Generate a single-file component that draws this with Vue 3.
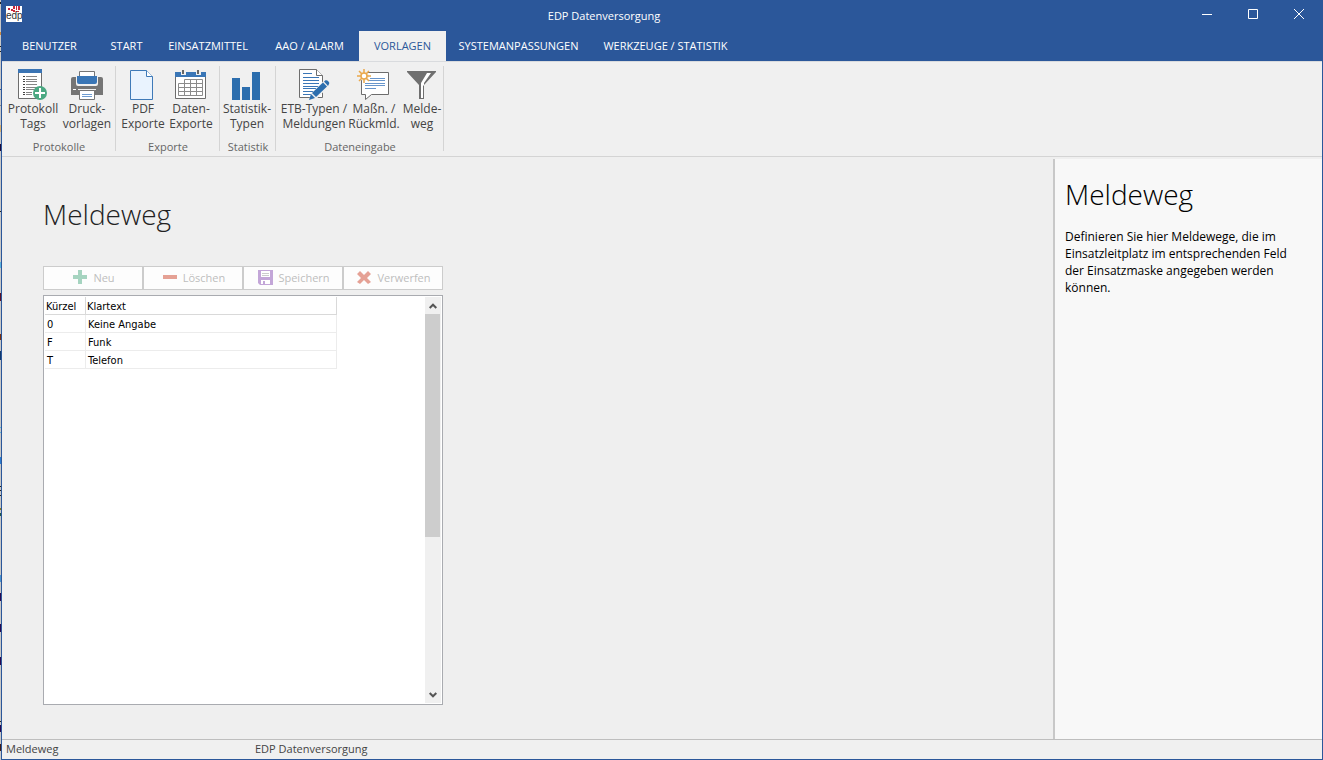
<script setup>
const tabs = ['BENUTZER', 'START', 'EINSATZMITTEL', 'AAO / ALARM', 'VORLAGEN', 'SYSTEMANPASSUNGEN', 'WERKZEUGE / STATISTIK']
const activeTab = 'VORLAGEN'

const groups = [
  { name: 'Protokolle', key: 'protokolle', items: [
    { icon: 'tags', lines: ['Protokoll', 'Tags'] },
    { icon: 'printer', lines: ['Druck-', 'vorlagen'] },
  ] },
  { name: 'Exporte', key: 'exporte', items: [
    { icon: 'pdf', lines: ['PDF', 'Exporte'] },
    { icon: 'calendar', lines: ['Daten-', 'Exporte'] },
  ] },
  { name: 'Statistik', key: 'statistik', items: [
    { icon: 'bars', lines: ['Statistik-', 'Typen'] },
  ] },
  { name: 'Dateneingabe', key: 'eingabe', items: [
    { icon: 'edit', lines: ['ETB-Typen /', 'Meldungen'] },
    { icon: 'message', lines: ['Maßn. /', 'Rückmld.'] },
    { icon: 'funnel', lines: ['Melde-', 'weg'] },
  ] },
]

const actions = [
  { icon: 'plus', label: 'Neu' },
  { icon: 'minus', label: 'Löschen' },
  { icon: 'disk', label: 'Speichern' },
  { icon: 'cross', label: 'Verwerfen' },
]

const rows = [
  { code: '0', text: 'Keine Angabe' },
  { code: 'F', text: 'Funk' },
  { code: 'T', text: 'Telefon' },
]

// Slivers of the windows lying behind this one: start, height, colour
const slivers = [
  [2, 2, '#222'], [32, 3, '#d08a3c'], [46, 1, '#222'], [51, 1, '#222'], [89, 1, '#2b579a'],
  [105, 1, '#888'], [125, 7, '#d8b070'], [144, 7, '#1c0838'], [211, 1, '#222'], [262, 6, '#5cb4e0'],
  [293, 8, '#5a1028'], [334, 6, '#7a3010'], [351, 9, '#10386c'], [427, 1, '#5cb4e0'], [432, 1, '#5cb4e0'],
  [457, 7, '#2c7cd0'], [486, 1, '#222'], [490, 1, '#222'], [495, 1, '#222'], [508, 2, '#8a7a20'],
  [513, 3, '#205848'], [575, 7, '#4c94d0'], [593, 8, '#280850'], [624, 8, '#280850'], [657, 8, '#280850'],
  [721, 1, '#222'], [725, 7, '#280850'], [744, 7, '#401c18'],
]
const backdrop = {
  backgroundImage: `linear-gradient(${slivers
    .map(([y, h, c]) => `transparent ${y}px, ${c} ${y}px ${y + h}px, transparent ${y + h}px`)
    .join(', ')})`,
}
</script>

<template>
  <div class="desktop" :style="backdrop">
    <div class="window">
      <header class="titlebar">
        <svg class="app-icon" width="16" height="16" viewBox="0 0 16 16" aria-hidden="true">
          <rect width="16" height="16" fill="#fff" />
          <g fill="#c8283c">
            <rect x="2" y="2" width="2" height="2" /><rect x="5" y="3" width="2" height="2" />
            <rect x="7" y="0" width="2" height="3" /><rect x="10" y="0" width="1" height="4" />
            <rect x="12" y="0" width="2" height="4" /><rect x="7" y="4" width="2" height="2" />
            <rect x="10" y="5" width="3" height="1" />
          </g>
          <text x="0" y="13" class="logo-text">edp</text>
        </svg>
        <span class="window-title">EDP Datenversorgung</span>
        <div class="window-controls">
          <button type="button" aria-label="Minimieren">
            <svg width="12" height="12" viewBox="0 0 12 12"><path d="M1 6.500h10" /></svg>
          </button>
          <button type="button" aria-label="Maximieren">
            <svg width="12" height="12" viewBox="0 0 12 12"><path d="M1.500 1.500h9v9h-9z" /></svg>
          </button>
          <button type="button" aria-label="Schließen">
            <svg width="12" height="12" viewBox="0 0 12 12"><path d="M1 1l10 10M11 1l-10 10" /></svg>
          </button>
        </div>
      </header>

      <nav class="tabs">
        <button v-for="tab in tabs" :key="tab" type="button" :class="{ active: tab === activeTab }">{{ tab }}</button>
      </nav>

      <section class="ribbon">
        <div v-for="group in groups" :key="group.key" class="group" :class="group.key">
          <div class="group-items">
            <button v-for="item in group.items" :key="item.icon" type="button" class="tool" :class="item.icon">
              <svg width="32" height="32" viewBox="0 0 32 32" aria-hidden="true">
                <template v-if="item.icon === 'tags'">
                  <path d="M1.500 2v27.500h23V2z" fill="#fff" stroke="#6d6d6d" />
                  <rect x="1" width="24" height="4" fill="#3a74b4" />
                  <path d="M6 7.500h2M6 10.500h2M6 12.500h2M6 15.500h2M6 18.500h2M6 20.500h2M6 23.500h2M6 25.500h2" stroke="#444" />
                  <path d="M9 7.500h11M9 10.500h11M9 12.500h11M9 15.500h11M9 18.500h11M9 20.500h8M9 23.500h6M9 25.500h6" stroke="#858585" />
                  <circle cx="23" cy="24" r="7" fill="#4ba882" />
                  <path d="M23 19v10M18 24h10" stroke="#fff" stroke-width="2" />
                </template>
                <template v-else-if="item.icon === 'printer'">
                  <path d="M2 8h3v7q0 2 2 2h18q2 0 2-2V8h3q2 0 2 2v16H0V10q0-2 2-2z" fill="#757575" />
                  <path d="M8.500 8V2.500h15V8" fill="#fff" stroke="#757575" />
                  <path d="M6 7h20v6q0 2-2 2H8q-2 0-2-2z" fill="#3a76b6" />
                  <path d="M8.500 21.500h15v9h-15z" fill="#fff" stroke="#757575" />
                  <path d="M7 20.500h18" stroke="#efefef" />
                  <path d="M11 25.500h10M11 27.500h10" stroke="#6e9bd0" />
                  <path d="M2 20.500h3" stroke="#fff" />
                </template>
                <template v-else-if="item.icon === 'pdf'">
                  <path d="M3.500 1.500h16l6 6v23h-22z" fill="#e9f3fe" stroke="#3f7ab8" />
                  <path d="M19.500 1.500v6h6" fill="#fff" stroke="#3f7ab8" />
                </template>
                <template v-else-if="item.icon === 'calendar'">
                  <path d="M.5 4v25.500h30V4z" fill="#fff" stroke="#6d6d6d" />
                  <path d="M0 3h31v5H0z" fill="#3a76b6" />
                  <path d="M6 1h5v5H6zM21 1h5v5h-5z" fill="#efefef" />
                  <path d="M8 1v4M23 1v4" stroke="#666" stroke-width="2" />
                  <path d="M9.500 10.500h18v16h-24v-12h24M3.500 18.500h24M3.500 22.500h24M9.500 10.500v16M15.500 10.500v16M21.500 10.500v16" fill="none" stroke="#8b8b8b" />
                </template>
                <template v-else-if="item.icon === 'bars'">
                  <path d="M1 9h8v22H1zM11 18h8v13h-8zM21 3h8v28h-8z" fill="#2c6eae" />
                </template>
                <template v-else-if="item.icon === 'edit'">
                  <path d="M1.500.5h17l6 6v22h-23z" fill="#fff" stroke="#6d6d6d" />
                  <path d="M18.500.5v6h6" fill="#fff" stroke="#6d6d6d" />
                  <path d="M5 4.500h9M5 8.500h16M5 11.500h16M5 14.500h16M5 17.500h16M5 19.500h13M5 22.500h11M5 25.500h8" stroke="#3a76b6" />
                  <path d="M12 31l2-6L27 12l4 4-13 13z" fill="#efefef" stroke="#efefef" stroke-width="2" />
                  <path d="M11 31l2-6 4 4zM14 24L25 13.500l4 4L18 28zM26 12.500l1.500-1.200q1.500-.5 3 1.200t.5 2.500L30 17z" fill="#2c6eae" />
                </template>
                <template v-else-if="item.icon === 'message'">
                  <path d="M3.500 3.500h27v22h-17l-6 5v-5h-4z" fill="#fff" stroke="#6d6d6d" />
                  <path d="M12 9.500h15M10 11.500h17M7 14.500h20M7 16.500h20M7 19.500h11" stroke="#6795cb" />
                  <circle cx="6" cy="7" r="5" fill="#efefef" />
                  <path d="M6 0v14M-1 7h14M1 2l10 10M11 2L1 12" stroke="#eaa84b" stroke-width="1.500" />
                  <circle cx="6" cy="7" r="3" fill="#fff" stroke="#eaa84b" stroke-width="1.500" />
                </template>
                <template v-else>
                  <path d="M1 2h29v1L18 16v14h-5V16L1 3z" fill="#6f6f6f" />
                  <path d="M21 4h4l-7 10v2l-1 1v12h-2V14z" fill="#fff" />
                </template>
              </svg>
              <span v-for="line in item.lines" :key="line">{{ line }}</span>
            </button>
          </div>
          <div class="group-name">{{ group.name }}</div>
        </div>
      </section>

      <div class="body">
        <main>
          <h1>Meldeweg</h1>
          <div class="actions">
            <button v-for="action in actions" :key="action.icon" type="button" disabled>
              <svg width="15" height="15" viewBox="0 0 15 15" aria-hidden="true">
                <path v-if="action.icon === 'plus'" d="M5 0h4v5h5v4H9v5H5V9H0V5h5z" fill="#a6d4c0" />
                <path v-else-if="action.icon === 'minus'" d="M0 5h14v4H0z" fill="#e5a195" />
                <template v-else-if="action.icon === 'disk'">
                  <path d="M0 0h15v15H2l-2-2z" fill="#c3a6d8" />
                  <path d="M3 1h9v6H3zM3 10h9v4H3z" fill="#fff" />
                  <path d="M4 3.500h7M4 5.500h7" stroke="#ccc" />
                  <path d="M5 11h2v3H5z" fill="#c3a6d8" />
                </template>
                <path v-else d="M3 1l4 4 4-4 3 3-4 4 4 4-3 2-4-4-4 4-3-2 4-4-4-4z" fill="#e5a195" />
              </svg>
              <span>{{ action.label }}</span>
            </button>
          </div>
          <div class="list">
            <div class="list-content">
              <table>
                <thead>
                  <tr><th scope="col">Kürzel</th><th scope="col">Klartext</th></tr>
                </thead>
                <tbody>
                  <tr v-for="row in rows" :key="row.code"><td>{{ row.code }}</td><td>{{ row.text }}</td></tr>
                </tbody>
              </table>
            </div>
            <div class="scrollbar">
              <button type="button" aria-label="Nach oben">
                <svg width="8" height="6" viewBox="0 0 8 6"><path d="M.7 5L4 1.700 7.300 5" /></svg>
              </button>
              <div class="track"><div class="thumb"></div></div>
              <button type="button" aria-label="Nach unten">
                <svg width="8" height="6" viewBox="0 0 8 6"><path d="M.7 1L4 4.300 7.300 1" /></svg>
              </button>
            </div>
          </div>
        </main>
        <aside>
          <h2>Meldeweg</h2>
          <p>Definieren Sie hier Meldewege, die im Einsatzleitplatz im entsprechenden Feld der Einsatzmaske angegeben werden können.</p>
        </aside>
      </div>

      <footer>
        <span>Meldeweg</span>
        <span>EDP Datenversorgung</span>
      </footer>
    </div>
  </div>
</template>

<style>
body {
  margin: 0;
}
</style>

<style scoped>
* {
  box-sizing: border-box;
}
.desktop {
  min-height: 100vh;
  display: flex;
  padding-left: 1px;
  background-color: #c8c8c8;
  font-family: "Open Sans", "Noto Sans", sans-serif;
  font-size: 12px;
  line-height: 15px;
  color: #444;
}
button {
  font: inherit;
  color: inherit;
  border: 0;
  padding: 0;
  background: none;
}
svg {
  display: block;
  overflow: visible;
}
.window {
  flex: 1;
  display: flex;
  flex-direction: column;
  min-width: 0;
  border: 1px solid #2b579a;
  border-top: 0;
  background: #efefef;
}
.titlebar {
  height: 31px;
  display: grid;
  grid-template-columns: 1fr auto 1fr;
  background: #2b579a;
  color: #fff;
}
.app-icon {
  margin: 6px 0 0 4px;
  overflow: hidden;
}
.logo-text {
  font: 10px "Liberation Sans", sans-serif;
  fill: #333;
}
.window-title {
  align-self: center;
  margin-right: 116px;
  font-size: 11px;
}
.window-controls {
  display: flex;
  justify-content: flex-end;
}
.window-controls button {
  width: 46px;
  height: 28px;
  display: flex;
  justify-content: center;
  align-items: center;
}
.window-controls path {
  fill: none;
  stroke: #fff;
}
.tabs {
  display: grid;
  grid-template-columns: 95px 59px 104px 99px 87px 145px 149px;
  height: 30px;
  background: #2b579a;
  color: #fff;
  font-size: 11px;
}
.tabs button {
  padding-bottom: 2px;
  white-space: nowrap;
}
.tabs .active {
  background: #f0f0f0;
  color: #2b579a;
}
.ribbon {
  display: flex;
  height: 96px;
  border-top: 1px solid #d9dbde;
  border-bottom: 1px solid #d4d4d4;
  background: #f0f0f0;
}
.group {
  position: relative;
  padding-top: 7px;
}
.group::after {
  content: "";
  position: absolute;
  right: 0;
  top: 4px;
  bottom: 5px;
  width: 1px;
  background: #d4d4d4;
}
.group-items {
  display: flex;
}
.tool {
  display: flex;
  flex-direction: column;
  align-items: center;
  white-space: nowrap;
}
.group-name {
  margin-top: 8px;
  text-align: center;
  font-size: 11px;
  color: #666;
}
.protokolle { width: 114px; }
.exporte { width: 104px; }
.statistik { width: 56px; }
.eingabe { width: 168px; }
.protokolle .group-items { padding-left: 4px; }
.exporte .group-items { padding-left: 3px; }
.eingabe .group-items { padding-left: 4px; }
.tags, .printer { width: 54px; }
.pdf, .calendar { width: 48px; }
.bars { width: 54px; }
.edit { width: 68px; }
.message { width: 52px; }
.funnel { width: 44px; }
.body {
  flex: 1;
  display: flex;
  padding-top: 2px;
}
main {
  flex: 1;
  display: flex;
  flex-direction: column;
  padding: 35px 41px 34px;
}
h1, h2 {
  margin: 0;
  font-size: 28px;
  line-height: 40px;
  font-weight: 300;
  color: #222;
}
.actions {
  display: grid;
  grid-template-columns: repeat(4, 1fr);
  width: 400px;
  margin: 32px 0 5px;
}
.actions button {
  display: flex;
  justify-content: center;
  align-items: center;
  gap: 5px;
  height: 24px;
  padding: 0 0 1px 2px;
  border: 1px solid #ccc;
  background: #fdfdfd;
  color: #bdbdbd;
  font-size: 11px;
}
.list {
  flex: 1;
  display: flex;
  width: 400px;
  padding: 1px;
  border: 1px solid #a9abb0;
  background: #fff;
}
.list-content {
  flex: 1;
}
table {
  border-collapse: separate;
  border-spacing: 0;
  table-layout: fixed;
  width: 292px;
  font-family: "DejaVu Sans Condensed", "DejaVu Sans", sans-serif;
  font-size: 11px;
  line-height: 15px;
  color: #000;
}
th, td {
  padding: 2px 2px 0;
  font-weight: 400;
  text-align: left;
  border-right: 1px solid #ececec;
  border-bottom: 1px solid #ececec;
}
th {
  padding: 2px 1px 0;
  border-color: #d9d9d9;
}
th:first-child {
  width: 41px;
}
.scrollbar {
  display: flex;
  flex-direction: column;
  width: 16px;
  background: #f0f0f0;
}
.scrollbar button {
  display: flex;
  justify-content: center;
  align-items: center;
  height: 17px;
}
.scrollbar path {
  fill: none;
  stroke: #555;
  stroke-width: 2;
}
.track {
  flex: 1;
}
.thumb {
  width: 15px;
  height: 60%;
  background: #cdcdcd;
}
aside {
  width: 269px;
  padding: 15px 20px 15px 10px;
  border-left: 2px solid #c8c8c8;
  background: #f8f8f8;
  color: #000;
}
h2 {
  color: #000;
}
p {
  margin: 14px 0 0;
  line-height: 17px;
}
footer {
  display: grid;
  grid-template-columns: 249px 1fr;
  height: 20px;
  padding-left: 4px;
  border-top: 1px solid #bebebe;
  background: #f0f0f0;
  font-size: 11px;
  line-height: 18px;
}
</style>
